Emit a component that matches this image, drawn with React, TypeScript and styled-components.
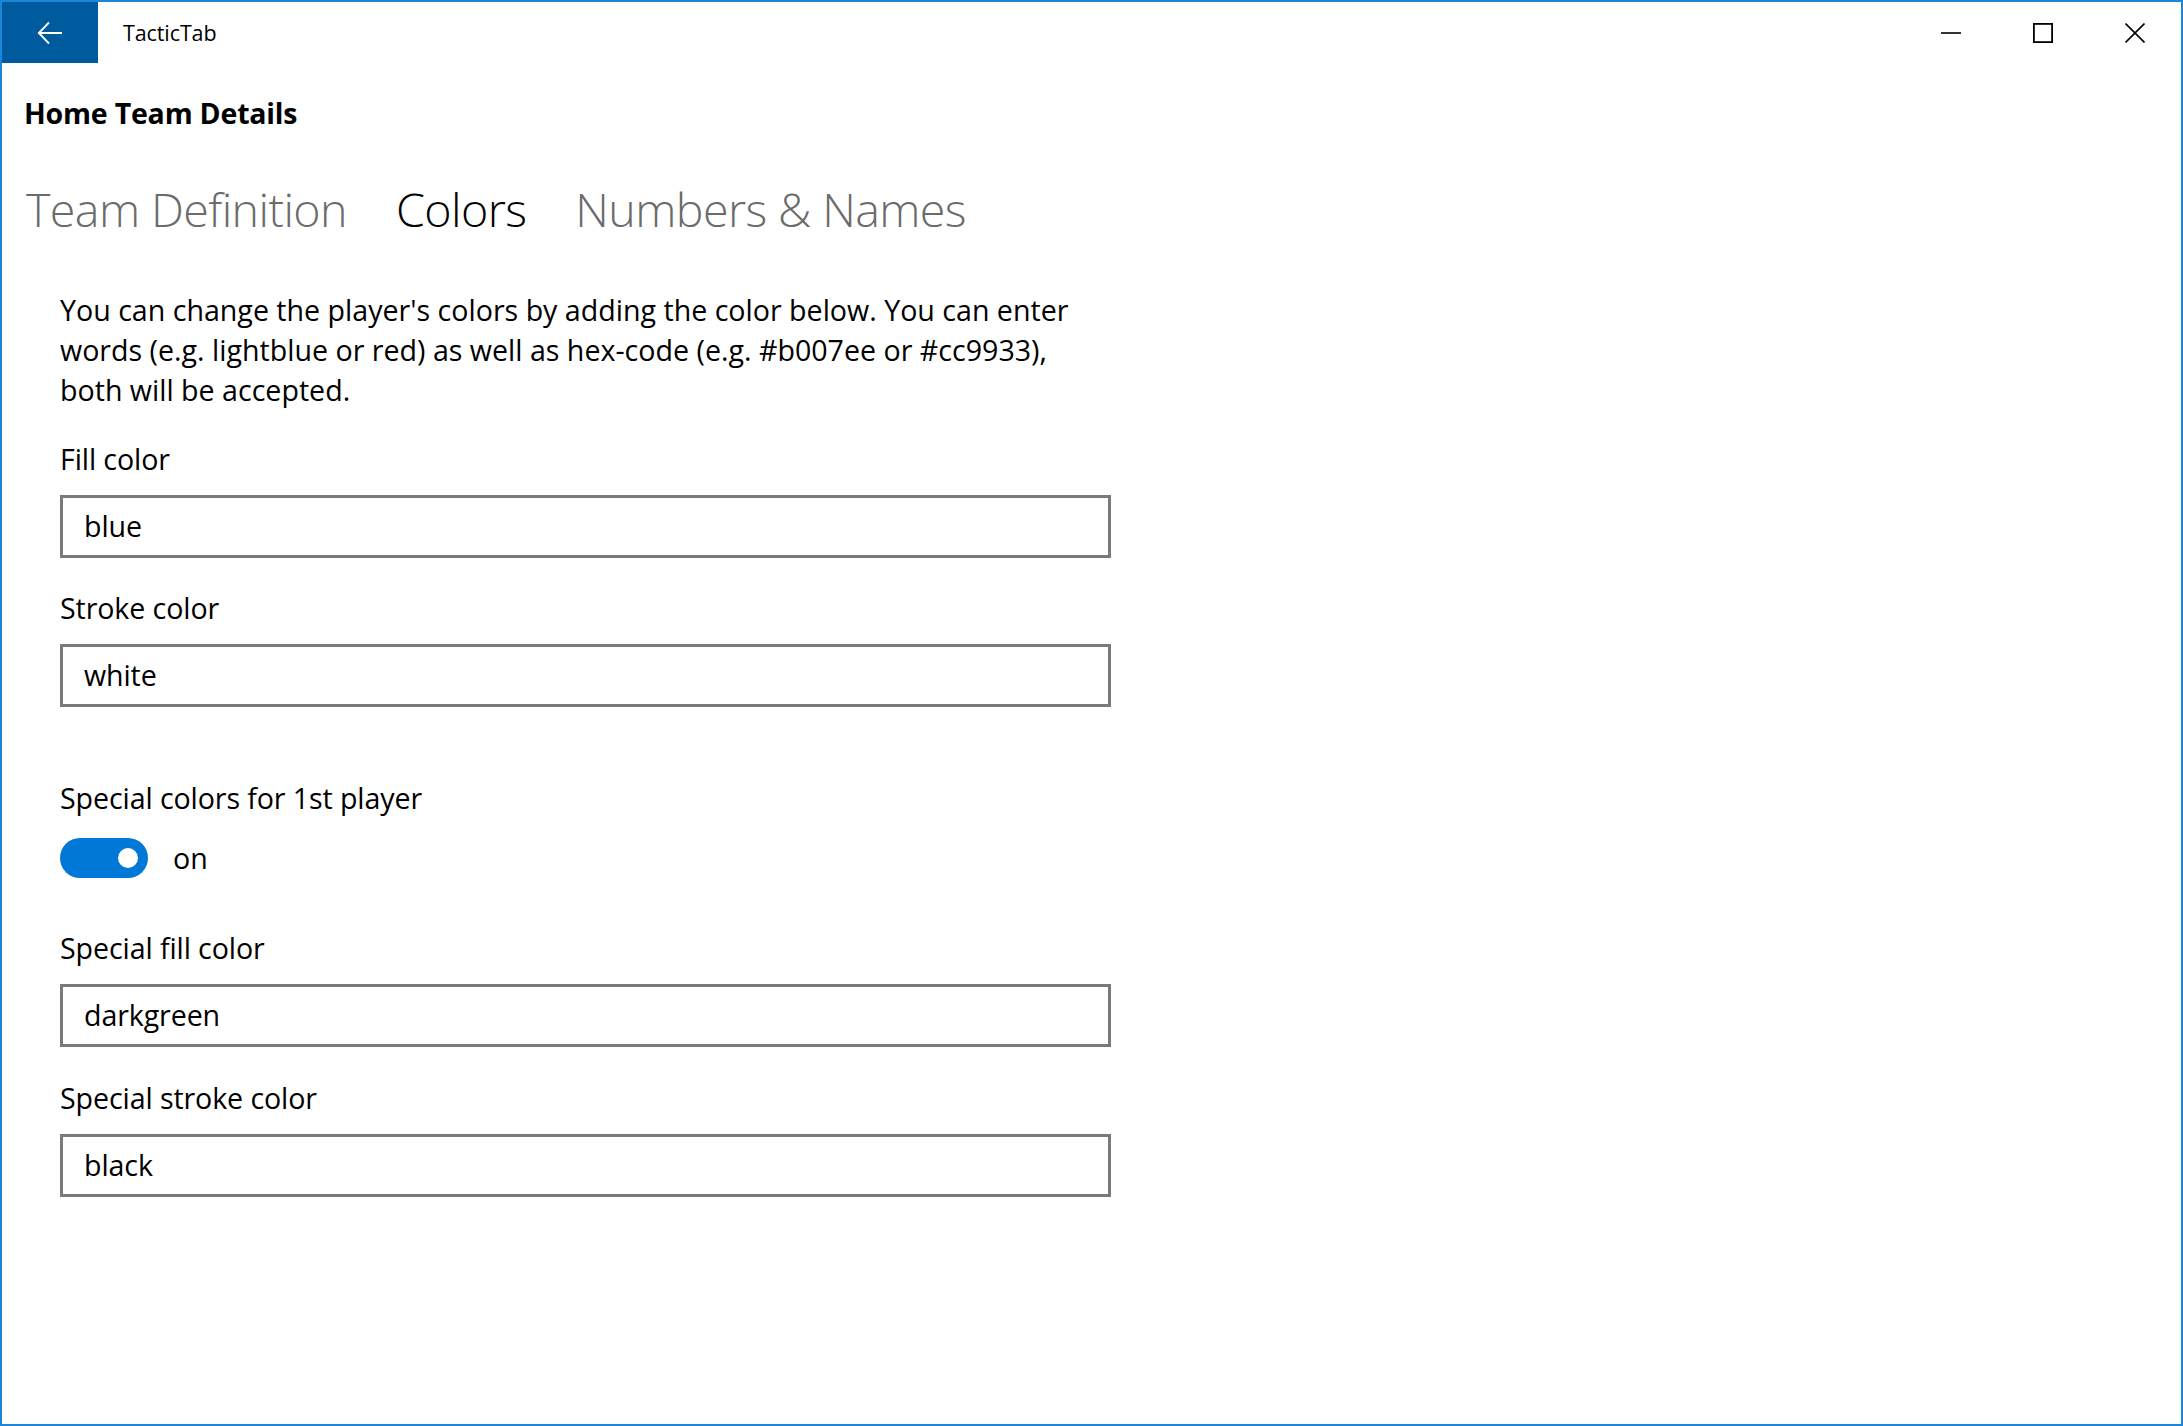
import React from 'react';
import styled, { createGlobalStyle } from 'styled-components';

const GlobalStyle = createGlobalStyle`
    html, body {
        margin: 0;
        padding: 0;
        background: #ffffff;
    }
    * {
        box-sizing: border-box;
    }
`;

const fields = [
    { label: 'Fill color', value: 'blue' },
    { label: 'Stroke color', value: 'white' },
];

const specialFields = [
    { label: 'Special fill color', value: 'darkgreen' },
    { label: 'Special stroke color', value: 'black' },
];

const tabs = [
    { name: 'Team Definition', active: false },
    { name: 'Colors', active: true },
    { name: 'Numbers & Names', active: false },
];

function App() {
    return <>
        <GlobalStyle />
        <Window>
            <TitleBar>
                <BackButton>
                    <svg width="26" height="24" viewBox="0 0 26 24">
                        <path d="M25 12H2M12 1.5L1.8 12L12 22.5" stroke="#fff" strokeWidth="1.8" fill="none" />
                    </svg>
                </BackButton>
                <AppTitle>TacticTab</AppTitle>
                <Spacer />
                <CaptionButton>
                    <svg width="20" height="20" viewBox="0 0 20 20">
                        <path d="M0 10H20" stroke="#000" strokeWidth="1.6" />
                    </svg>
                </CaptionButton>
                <CaptionButton>
                    <svg width="20" height="20" viewBox="0 0 20 20">
                        <rect x="0.9" y="0.9" width="18.2" height="18.2" stroke="#000" strokeWidth="1.8" fill="none" />
                    </svg>
                </CaptionButton>
                <CaptionButton>
                    <svg width="20" height="20" viewBox="0 0 20 20">
                        <path d="M0.5 0.5L19.5 19.5M19.5 0.5L0.5 19.5" stroke="#000" strokeWidth="1.6" />
                    </svg>
                </CaptionButton>
            </TitleBar>

            <Content>
                <PageTitle>Home Team Details</PageTitle>
                <TabRow>
                    {tabs.map((tab) => (
                        <Tab key={tab.name} active={tab.active}>{tab.name}</Tab>
                    ))}
                </TabRow>

                <Form>
                    <Intro>
                        You can change the player's colors by adding the color below. You can enter
                        words (e.g. lightblue or red) as well as hex-code (e.g. #b007ee or #cc9933),
                        both will be accepted.
                    </Intro>

                    {fields.map((f, i) => (
                        <Field key={f.label} top={i === 0 ? 31 : 32}>
                            <Label>{f.label}</Label>
                            <TextBox defaultValue={f.value} />
                        </Field>
                    ))}

                    <Field top={73}>
                        <Label>Special colors for 1st player</Label>
                        <ToggleRow>
                            <Toggle>
                                <Knob />
                            </Toggle>
                            <ToggleText>on</ToggleText>
                        </ToggleRow>
                    </Field>

                    {specialFields.map((f, i) => (
                        <Field key={f.label} top={i === 0 ? 52 : 33}>
                            <Label>{f.label}</Label>
                            <TextBox defaultValue={f.value} />
                        </Field>
                    ))}
                </Form>
            </Content>
        </Window>
    </>
}

export default App;

const Window = styled.div`
    width: 2183px;
    height: 1426px;
    border: 2px solid #1a86d9;
    display: flex;
    flex-direction: column;
    background: #ffffff;
    font-family: 'Open Sans', 'Noto Sans', sans-serif;
    color: #000000;
    overflow: hidden;
`

const TitleBar = styled.header`
    height: 61px;
    display: flex;
    align-items: center;
    flex-shrink: 0;
`

const BackButton = styled.div`
    width: 96px;
    height: 100%;
    background-color: #005a9e;
    display: flex;
    align-items: center;
    justify-content: center;
`

const AppTitle = styled.span`
    margin-left: 25px;
    font-size: 21.5px;
    letter-spacing: -0.1px;
`

const Spacer = styled.div`
    flex: 1;
`

const CaptionButton = styled.div`
    width: 92px;
    height: 100%;
    display: flex;
    align-items: center;
    justify-content: center;
`

const Content = styled.main`
    padding-left: 22px;
    display: flex;
    flex-direction: column;
`

const PageTitle = styled.h1`
    margin: 31px 0 0 0;
    font-size: 28.5px;
    line-height: 38px;
    font-weight: 700;
    letter-spacing: -0.2px;
`

const TabRow = styled.nav`
    margin-top: 45px;
    display: flex;
    gap: 49px;
    padding-left: 2px;
`

const Tab = styled.div<{ active?: boolean }>`
    font-size: 46.6px;
    line-height: 64px;
    font-weight: 300;
    letter-spacing: -0.6px;
    color: ${props => props.active ? '#000000' : '#6b6b6b'};
`

const Form = styled.section`
    padding-left: 36px;
    margin-top: 49px;
    display: flex;
    flex-direction: column;
    width: 1089px;
`

const Intro = styled.p`
    margin: 0;
    font-size: 28.6px;
    line-height: 40px;
    letter-spacing: 0;
    width: 1035px;
`

const Field = styled.div<{ top: number }>`
    margin-top: ${props => props.top}px;
    display: flex;
    flex-direction: column;
`

const Label = styled.label`
    font-size: 28.6px;
    line-height: 36px;
    letter-spacing: -0.1px;
    margin-bottom: 18px;
`

const TextBox = styled.input`
    width: 1051px;
    height: 63px;
    border: 3px solid #7a7a7a;
    border-radius: 0;
    padding: 0 0 3px 21px;
    font-family: 'Open Sans', 'Noto Sans', sans-serif;
    font-size: 28.6px;
    letter-spacing: -0.1px;
    color: #000000;
    background: #ffffff;
    outline: none;
`

const ToggleRow = styled.div`
    display: flex;
    align-items: center;
    gap: 25px;
    margin-top: 4px;
`

const Toggle = styled.div`
    width: 88px;
    height: 40px;
    border-radius: 20px;
    background-color: #0078d7;
    display: flex;
    align-items: center;
    justify-content: flex-end;
    padding-right: 10px;
`

const Knob = styled.div`
    width: 20px;
    height: 20px;
    border-radius: 50%;
    background-color: #ffffff;
`

const ToggleText = styled.span`
    font-size: 28.6px;
    line-height: 36px;
`
